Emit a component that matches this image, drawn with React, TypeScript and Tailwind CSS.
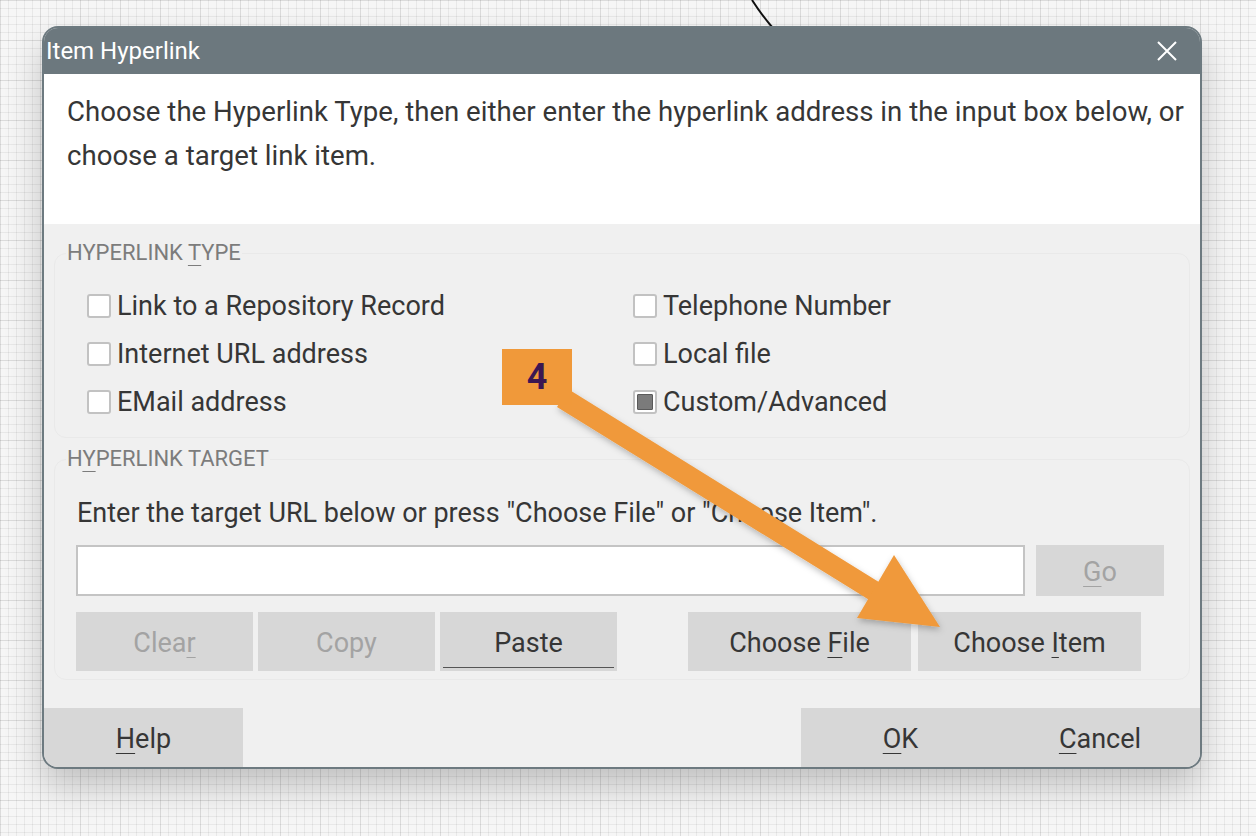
import type { ReactNode } from "react";

const font = "font-['Roboto','Liberation_Sans',sans-serif]";

function Mn({ children }: { children: ReactNode }) {
  return <span className="underline decoration-1 underline-offset-[5px]">{children}</span>;
}

function Check({ label, checked }: { label: string; checked?: boolean }) {
  return (
    <div className="flex h-[48px] items-center gap-[6px]">
      <div className="flex h-[24px] w-[24px] items-center justify-center rounded-[3px] border-2 border-[#c2c2c2] bg-white p-[2px]">
        {checked && <div className="h-full w-full rounded-[1px] border border-[#5a5a5a] bg-[#7b7b7b]" />}
      </div>
      <span className="text-[27px] text-[#363636]">{label}</span>
    </div>
  );
}

function Btn({
  children,
  disabled,
  className = "",
  focused,
}: {
  children: ReactNode;
  disabled?: boolean;
  className?: string;
  focused?: boolean;
}) {
  return (
    <button
      className={
        "relative flex items-center justify-center bg-[#d7d7d7] pt-[4px] text-[27px] " +
        (disabled ? "text-[#a3a3a3] " : "text-[#363636] ") +
        className
      }
    >
      <span>{children}</span>
      {focused && <span className="absolute bottom-[3px] left-[3px] right-[3px] h-px bg-[#555]" />}
    </button>
  );
}

function Group({ title, children, className = "" }: { title: ReactNode; children: ReactNode; className?: string }) {
  return (
    <fieldset className={"mx-[10px] rounded-[12px] border border-[#e9e9e9] " + className}>
      <legend className="ml-[11px] px-[1px] text-[22px] leading-[24px] text-[#7c7c7c]">{title}</legend>
      {children}
    </fieldset>
  );
}

export default function App() {
  return (
    <div
      className={
        "relative h-[836px] w-[1256px] overflow-hidden bg-[#f6f6f6] pl-[42px] pt-[26px] " +
        "bg-[linear-gradient(to_right,rgba(0,0,0,0.06)_1px,transparent_1px),linear-gradient(to_bottom,rgba(0,0,0,0.06)_1px,transparent_1px),linear-gradient(to_right,rgba(0,0,0,0.05)_1px,transparent_1px),linear-gradient(to_bottom,rgba(0,0,0,0.05)_1px,transparent_1px)] " +
        "bg-size-[8px_8px,8px_8px,40px_40px,40px_40px] " +
        font
      }
    >
      {/* stray connector line above the dialog */}
      <svg className="absolute left-0 top-0" width="1256" height="40">
        <path d="M752 0 Q761 14 772 27" stroke="#111" strokeWidth="2" fill="none" />
      </svg>

      <div className="relative flex h-[743px] w-[1160px] flex-col overflow-hidden rounded-[16px] border-2 border-[#6d7a80] bg-[#f0f0f0] shadow-[0_18px_36px_rgba(0,0,0,0.22)]">
        {/* title bar */}
        <div className="flex h-[46px] shrink-0 items-center justify-between bg-[#6c787e] pl-[2px] pr-[22px]">
          <span className="text-[24px] text-white">Item Hyperlink</span>
          <svg width="22" height="22" viewBox="0 0 22 22">
            <path d="M2 2 L20 20 M20 2 L2 20" stroke="#fff" strokeWidth="2" />
          </svg>
        </div>

        {/* intro */}
        <div className="h-[150px] shrink-0 bg-white pl-[23px] pr-[10px] pt-[16px] text-[27.6px] leading-[44px] text-[#363636]">
          Choose the Hyperlink Type, then either enter the hyperlink address in the input box below, or
          <br />
          choose a target link item.
        </div>

        <Group
          className="mt-[17px] h-[197px] pb-[12px]"
          title={
            <>
              HYPERLINK <Mn>T</Mn>YPE
            </>
          }
        >
          <div className="mt-[17px] grid grid-cols-[546px_1fr] pl-[32px]">
            <Check label="Link to a Repository Record" />
            <Check label="Telephone Number" />
            <Check label="Internet URL address" />
            <Check label="Local file" />
            <Check label="EMail address" />
            <Check label="Custom/Advanced" checked />
          </div>
        </Group>

        <Group
          className="mt-[9px] h-[233px]"
          title={
            <>
              H<Mn>Y</Mn>PERLINK TARGET
            </>
          }
        >
          <div className="pl-[21px] pr-[24px]">
            <div className="mt-[22px] pl-[1px] text-[27px] leading-[40px] text-[#363636]">
              Enter the target URL below or press "Choose File" or "Choose Item".
            </div>
            <div className="mt-[12px] flex gap-[11px]">
              <div className="h-[51px] w-[949px] border-2 border-[#c4c4c4] bg-white" />
              <Btn disabled className="h-[51px] w-[128px]">
                <Mn>G</Mn>o
              </Btn>
            </div>
            <div className="mt-[16px] flex">
              <Btn disabled className="h-[59px] w-[177px]">
                Clea<Mn>r</Mn>
              </Btn>
              <Btn disabled className="ml-[5px] h-[59px] w-[177px]">
                Copy
              </Btn>
              <Btn focused className="ml-[5px] h-[59px] w-[177px]">
                Paste
              </Btn>
              <Btn className="ml-[71px] h-[59px] w-[223px]">
                Choose <Mn>F</Mn>ile
              </Btn>
              <Btn className="ml-[7px] h-[59px] w-[223px]">
                Choose <Mn>I</Mn>tem
              </Btn>
            </div>
          </div>
        </Group>

        {/* footer */}
        <div className="mt-auto flex h-[59px] shrink-0">
          <Btn className="h-full w-[199px]">
            <Mn>H</Mn>elp
          </Btn>
          <div className="flex-1" />
          <Btn className="h-full w-[199px]">
            <Mn>O</Mn>K
          </Btn>
          <Btn className="h-full w-[200px]">
            <Mn>C</Mn>ancel
          </Btn>
        </div>
      </div>

      {/* step annotation */}
      <svg className="pointer-events-none absolute left-0 top-0" width="1256" height="836">
        <defs>
          <filter id="sh" x="-10%" y="-10%" width="130%" height="130%">
            <feDropShadow dx="1" dy="3" stdDeviation="3" floodColor="#000" floodOpacity="0.25" />
          </filter>
        </defs>
        <g fill="#f0993a" filter="url(#sh)">
          <polygon points="568,389 557,407 871,601 882,584" />
          <polygon points="894,555 857,618 940,627" />
        </g>
      </svg>
      <div className="absolute left-[502px] top-[349px] flex h-[56px] w-[70px] items-center justify-center bg-[#f0993a] text-[36px] font-bold text-[#3b1752]">
        4
      </div>
    </div>
  );
}
